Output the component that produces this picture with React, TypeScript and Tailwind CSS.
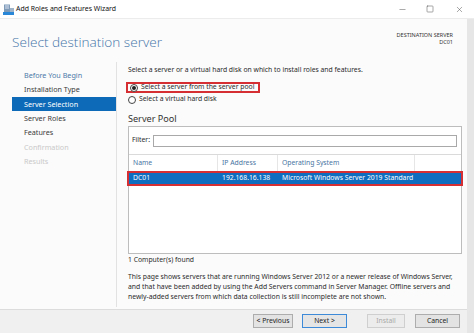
import { Minus, Square, X } from 'lucide-react';

const navItems = [
  { label: 'Before You Begin', tone: 'link' },
  { label: 'Installation Type', tone: 'done' },
  { label: 'Server Selection', tone: 'active' },
  { label: 'Server Roles', tone: 'done' },
  { label: 'Features', tone: 'done' },
  { label: 'Confirmation', tone: 'off' },
  { label: 'Results', tone: 'off' },
];

const toneClass: Record<string, string> = {
  link: 'text-[#4b79a8]',
  done: 'text-[#3a3a3a]',
  active: 'bg-[#0d6ab8] text-white',
  off: 'text-[#c9c9c9]',
};

const WizardIcon = () => (
  <svg width="11" height="11" viewBox="0 0 11 11">
    <rect x="1" y="0.5" width="6" height="8" fill="#7f9bb8" />
    <rect x="2" y="1.5" width="4" height="1" fill="#d9e4ef" />
    <rect x="2" y="3.5" width="4" height="1" fill="#d9e4ef" />
    <rect x="0" y="8" width="11" height="3" fill="#2a86d6" />
    <rect x="7" y="4" width="4" height="4" fill="#9fb4c9" />
  </svg>
);

const Radio = ({ checked }: { checked?: boolean }) => (
  <span className="w-[8px] h-[8px] rounded-full border border-[#444] bg-white flex items-center justify-center shrink-0">
    {checked && <span className="w-[4px] h-[4px] rounded-full bg-[#222]" />}
  </span>
);

const Button = ({ label, primary, disabled }: { label: string; primary?: boolean; disabled?: boolean }) => (
  <div
    className={`h-[14px] flex items-center justify-center border text-[6.8px] ${
      primary
        ? 'border-[#3c8ad8] bg-[#e5e5e5] text-[#222]'
        : disabled
          ? 'border-[#cfcfcf] bg-[#ececec] text-[#a8a8a8]'
          : 'border-[#adadad] bg-[#e3e3e3] text-[#222]'
    }`}
  >
    {label}
  </div>
);

export default function App() {
  return (
    <div className="w-[474px] h-[333px] bg-white flex flex-col overflow-hidden font-['Segoe_UI','Noto_Sans',sans-serif] text-[#222]">
      <div className="h-[19px] shrink-0 flex items-center bg-white border-b border-[#ececec]">
        <div className="pl-[3px] pr-[2px] flex items-center">
          <WizardIcon />
        </div>
        <span className="text-[6.9px] text-[#111]">Add Roles and Features Wizard</span>
        <div className="ml-auto flex items-center text-[#444]">
          <div className="w-[28px] flex justify-center">
            <Minus size={9} strokeWidth={1.2} />
          </div>
          <div className="w-[28px] flex justify-center">
            <Square size={8} strokeWidth={1.4} />
          </div>
          <div className="w-[30px] flex justify-center">
            <X size={9} strokeWidth={1.2} />
          </div>
        </div>
      </div>

      <div className="flex flex-1 min-h-0">
        <div className="flex-1 flex flex-col bg-[#fbfbfb] min-h-0">
          <div className="h-[41px] shrink-0 flex items-start px-[12px]">
            <h1 className="mt-[12px] text-[13.6px] font-light text-[#4375a8] leading-[22px] font-['Open_Sans','Noto_Sans',sans-serif]">
              Select destination server
            </h1>
            <div className="ml-auto mt-[13px] mr-[2px] text-right text-[5.5px] leading-[7px] text-[#333]">
              <div>DESTINATION SERVER</div>
              <div>DC01</div>
            </div>
          </div>

          <div className="flex flex-1 min-h-0">
            <div className="w-[117px] pl-[12px] pt-[6px] border-r border-[#e2e2e2] my-[2px]">
              {navItems.map((item) => (
                <div
                  key={item.label}
                  className={`h-[14.4px] pl-[12px] flex items-center text-[7.2px] ${toneClass[item.tone]}`}
                >
                  {item.label}
                </div>
              ))}
            </div>

            <div className="flex-1 pl-[11px] pr-[5px] flex flex-col text-[6.8px] text-[#2a2a2a]">
              <p className="mt-[5px] leading-[10px]">
                Select a server or a virtual hard disk on which to install roles and features.
              </p>
              <div className="mt-[7px] -ml-[2px] w-[134px] h-[11px] border-2 border-[#d62f33] flex items-center gap-[3px] pl-[2px] whitespace-nowrap">
                <Radio checked />
                <span>Select a server from the server pool</span>
              </div>
              <div className="mt-[1px] h-[11px] flex items-center gap-[3px] whitespace-nowrap">
                <Radio />
                <span>Select a virtual hard disk</span>
              </div>

              <h2 className="mt-[8px] text-[9.1px] leading-[12px] text-[#333]">Server Pool</h2>

              <div className="mt-[1px] h-[128px] shrink-0 border border-[#bdbdbd] bg-white flex flex-col">
                <div className="h-[28px] flex items-center gap-[3px] px-[3px] border-b border-[#dadada]">
                  <span>Filter:</span>
                  <div className="flex-1 h-[12px] border border-[#a9a9a9] bg-white mr-[1px]" />
                </div>
                <div className="h-[16px] flex text-[#4874a2]">
                  <div className="w-[89px] pl-[4px] flex items-center border-r border-[#e6e6e6]">Name</div>
                  <div className="w-[60px] pl-[4px] flex items-center border-r border-[#e6e6e6]">IP Address</div>
                  <div className="w-[137px] pl-[4px] flex items-center border-r border-[#e6e6e6]">Operating System</div>
                </div>
                <div className="-mx-[2px] h-[15px] border-2 border-[#d62f33] bg-[#0e6dbf] text-white flex items-center">
                  <div className="w-[89px] pl-[4px]">DC01</div>
                  <div className="w-[60px] pl-[4px]">192.168.16.138</div>
                  <div className="pl-[4px]">Microsoft Windows Server 2019 Standard</div>
                </div>
              </div>

              <p className="mt-[1px] leading-[10px]">1 Computer(s) found</p>
              <p className="mt-[7px] leading-[10px]">
                This page shows servers that are running Windows Server 2012 or a newer release of Windows Server,
                <br />
                and that have been added by using the Add Servers command in Server Manager. Offline servers and
                <br />
                newly-added servers from which data collection is still incomplete are not shown.
              </p>
            </div>
          </div>

          <div className="h-[24px] shrink-0 border-t border-[#dcdcdc] bg-[#f0f0f0] flex items-center justify-end pr-[7px] pb-[1px]">
            <div className="w-[40px]">
              <Button label="< Previous" />
            </div>
            <div className="w-[45px] ml-[9px]">
              <Button label="Next >" primary />
            </div>
            <div className="w-[38px] ml-[20px]">
              <Button label="Install" disabled />
            </div>
            <div className="w-[45px] ml-[10px]">
              <Button label="Cancel" />
            </div>
          </div>
        </div>
        <div className="w-[7px] bg-[#e6e6e6]" />
      </div>
    </div>
  );
}
